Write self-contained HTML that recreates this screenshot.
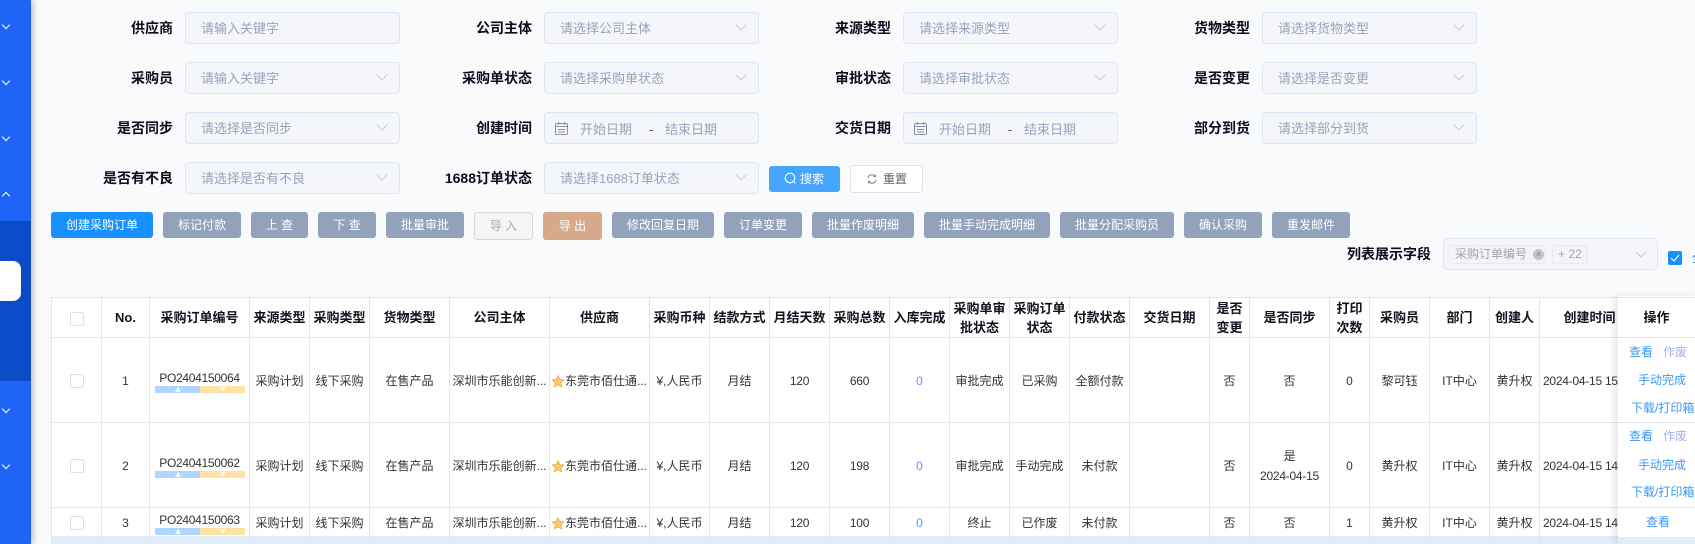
<!DOCTYPE html>
<html lang="zh-CN">
<head>
<meta charset="utf-8">
<title>采购订单</title>
<style>
*{box-sizing:border-box}
html,body{margin:0;padding:0;width:1695px;height:544px;overflow:hidden;background:#f9fafc;font-family:"Liberation Sans","Noto Sans CJK SC",sans-serif;font-size:12px;color:#333}
.a{position:absolute}
#side{left:0;top:0;width:31px;height:544px;background:#1d63f6;box-shadow:2px 0 6px rgba(0,0,0,.25)}
#dark{left:0;top:221px;width:31px;height:160px;background:#0b4bc8}
#pill{left:0;top:261px;width:21px;height:40px;background:#fff;border-radius:0 8px 8px 0}
.cv{position:absolute;left:3px;width:6px;height:6px;border-right:1px solid #fff;border-bottom:1px solid #fff;transform:rotate(45deg)}
.up{transform:rotate(225deg)}
.l{position:absolute;width:120px;text-align:right;font-size:14px;font-weight:bold;line-height:32px;height:32px;color:#0c0c1e;white-space:nowrap}
.i{position:absolute;width:215px;height:32px;background:#f4f6fb;border:1px solid #dfe5f4;border-radius:4px;font-size:13px;line-height:31px;padding-left:15px;color:#98a3b9;white-space:nowrap}
.i.s:after{content:"";position:absolute;right:13px;top:8px;width:7px;height:7px;border-right:1px solid #c6cbd6;border-bottom:1px solid #c6cbd6;transform:rotate(45deg)}
.i span{position:absolute;top:1px}
.i svg{position:absolute;left:10px;top:9px}
.b{position:absolute;top:212px;height:26px;line-height:26px;border-radius:3px;background:#93a2bb;color:#fff;text-align:center;font-size:12px;white-space:nowrap}
#wrap{left:51px;top:297px;width:1644px;height:247px;overflow:hidden}
table{border-collapse:separate;border-spacing:0;table-layout:fixed;width:1588px;background:#fff;border-top:1px solid #e1e6ef;border-left:1px solid #e1e6ef}
td,th{border-right:1px solid #e1e6ef;border-bottom:1px solid #e1e6ef;padding:1px 0 0;text-align:center;vertical-align:middle;white-space:nowrap;overflow:hidden;font-size:12px;line-height:20px;color:#333;font-weight:normal}
th{font-size:13px;font-weight:bold;color:#12121f;padding:0;line-height:19px}
tr.h{height:40px}tr.r1{height:85px}tr.r3{height:29px}
tr.f td{background:#e2edfc;border-color:#dbe6f6;border-bottom:0}
.cb{display:inline-block;width:14px;height:14px;border:1px solid #dcdfe6;border-radius:2px;background:#fff;vertical-align:middle}
.po{position:relative;height:83px}
.po.s{height:27px}
.po b{position:absolute;left:0;right:0;font-weight:normal;letter-spacing:-.3px}
.bar{position:absolute;left:5px;width:90px;height:7px;background:linear-gradient(90deg,#aed6ff 0,#aed6ff 50%,#ffe3a4 50%,#ffe3a4 100%)}
.bar i,.bar u{position:absolute;top:1px;width:0;height:0;border-left:3px solid transparent;border-right:3px solid transparent}
.bar i{left:20px;border-bottom:5px solid #fff}
.bar u{left:65px;border-top:5px solid #fff}
.n{letter-spacing:-.25px}
.bl{color:#5b96f2}
.st{vertical-align:-3px;margin-right:1px}
#op{left:1618px;top:296px;width:77px;height:248px;background:#fff;box-shadow:-4px 0 6px rgba(40,50,80,.1);overflow:visible}
#op div{position:absolute;white-space:nowrap;line-height:16px}
#clip{left:0;top:0;width:77px;height:248px;overflow:hidden}
.ln{left:0;width:77px;height:1px;background:#e1e6ef}
.t{color:#3a98fb}
.v{color:#a3aef0}
</style>
</head>
<body>
<div class="a" id="side"></div>
<div class="a" id="dark"></div>
<div class="a" id="pill"></div>
<span class="cv" style="top:22px"></span>
<span class="cv" style="top:78px"></span>
<span class="cv" style="top:134px"></span>
<span class="cv up" style="top:193px"></span>
<span class="cv" style="top:406px"></span>
<span class="cv" style="top:462px"></span>

<div class="l" style="left:53px;top:12px">供应商</div><div class="i" style="left:185px;top:12px">请输入关键字</div>
<div class="l" style="left:412px;top:12px">公司主体</div><div class="i s" style="left:544px;top:12px">请选择公司主体</div>
<div class="l" style="left:771px;top:12px">来源类型</div><div class="i s" style="left:903px;top:12px">请选择来源类型</div>
<div class="l" style="left:1130px;top:12px">货物类型</div><div class="i s" style="left:1262px;top:12px">请选择货物类型</div>

<div class="l" style="left:53px;top:62px">采购员</div><div class="i s" style="left:185px;top:62px">请输入关键字</div>
<div class="l" style="left:412px;top:62px">采购单状态</div><div class="i s" style="left:544px;top:62px">请选择采购单状态</div>
<div class="l" style="left:771px;top:62px">审批状态</div><div class="i s" style="left:903px;top:62px">请选择审批状态</div>
<div class="l" style="left:1130px;top:62px">是否变更</div><div class="i s" style="left:1262px;top:62px">请选择是否变更</div>

<div class="l" style="left:53px;top:112px">是否同步</div><div class="i s" style="left:185px;top:112px">请选择是否同步</div>
<div class="l" style="left:412px;top:112px">创建时间</div>
<div class="i" style="left:544px;top:112px"><svg width="13" height="13" viewBox="0 0 13 13" fill="none" stroke="#8d93a5"><rect x=".5" y="1.500" width="12" height="11" rx="1"/><path d="M.5 4.500h12M3.500 0v3M9.500 0v3M3 7.500h7M3 10h7"/></svg><span style="left:35px">开始日期</span><span style="left:104px;color:#555">-</span><span style="left:120px">结束日期</span></div>
<div class="l" style="left:771px;top:112px">交货日期</div>
<div class="i" style="left:903px;top:112px"><svg width="13" height="13" viewBox="0 0 13 13" fill="none" stroke="#8d93a5"><rect x=".5" y="1.500" width="12" height="11" rx="1"/><path d="M.5 4.500h12M3.500 0v3M9.500 0v3M3 7.500h7M3 10h7"/></svg><span style="left:35px">开始日期</span><span style="left:104px;color:#555">-</span><span style="left:120px">结束日期</span></div>
<div class="l" style="left:1130px;top:112px">部分到货</div><div class="i s" style="left:1262px;top:112px">请选择部分到货</div>

<div class="l" style="left:53px;top:162px">是否有不良</div><div class="i s" style="left:185px;top:162px">请选择是否有不良</div>
<div class="l" style="left:412px;top:162px">1688订单状态</div><div class="i s" style="left:544px;top:162px">请选择1688订单状态</div>

<div class="a" style="left:769px;top:166px;width:71px;height:26px;background:#46a6ff;border-radius:3px;color:#fff;line-height:26px;padding-left:31px;white-space:nowrap">搜索</div>
<svg class="a" style="left:784px;top:172px" width="13" height="13" viewBox="0 0 13 13" fill="none" stroke="#fff" stroke-width="1.100"><circle cx="6" cy="6" r="4.800"/><path d="M9.500 9.500l2 2"/></svg>
<div class="a" style="left:850px;top:165px;width:73px;height:28px;background:#fff;border:1px solid #dfe3ec;border-radius:3px;color:#606266;line-height:26px;padding-left:32px;white-space:nowrap">重置</div>
<svg class="a" style="left:867px;top:174px" width="10" height="10" viewBox="0 0 10 10" fill="none" stroke="#7d8390"><path d="M1 4a4 4 0 0 1 7-1.800M9 6a4 4 0 0 1-7 1.800"/><path d="M8.400.6v2H6.400M1.600 9.400v-2h2"/></svg>

<div class="b" style="left:51px;width:102px;background:#1890ff">创建采购订单</div>
<div class="b" style="left:163px;width:78px">标记付款</div>
<div class="b" style="left:251px;width:57px">上 查</div>
<div class="b" style="left:318px;width:58px">下 查</div>
<div class="b" style="left:386px;width:78px">批量审批</div>
<div class="b" style="left:474px;width:59px;height:28px;line-height:26px;background:#f5f5f5;border:1px solid #d9d9d9;color:#aaa">导 入</div>
<div class="b" style="left:543px;width:59px;height:28px;line-height:28px;background:#d5a98a">导 出</div>
<div class="b" style="left:612px;width:102px">修改回复日期</div>
<div class="b" style="left:724px;width:78px">订单变更</div>
<div class="b" style="left:812px;width:102px">批量作废明细</div>
<div class="b" style="left:924px;width:126px">批量手动完成明细</div>
<div class="b" style="left:1060px;width:114px">批量分配采购员</div>
<div class="b" style="left:1184px;width:78px">确认采购</div>
<div class="b" style="left:1272px;width:78px">重发邮件</div>

<div class="a" style="left:1347px;top:244px;font-size:14px;font-weight:bold;line-height:20px;color:#0c0c1e;white-space:nowrap">列表展示字段</div>
<div class="a" style="left:1443px;top:238px;width:215px;height:32px;background:#f4f6fb;border:1px solid #dfe5f4;border-radius:4px"></div>
<div class="a" style="left:1449px;top:245px;width:97px;height:19px;background:#f4f4f5;border:1px solid #e9e9eb;border-radius:3px;color:#a0a4ac;line-height:17px;padding-left:5px;white-space:nowrap">采购订单编号</div>
<div class="a" style="left:1533px;top:249px;width:11px;height:11px;border-radius:50%;background:#c0c4cc;color:#7d818a;font-size:9px;line-height:11px;text-align:center">×</div>
<div class="a" style="left:1552px;top:245px;width:36px;height:19px;background:#f4f4f5;border:1px solid #e9e9eb;border-radius:3px;color:#a0a4ac;line-height:17px;text-align:center;white-space:nowrap">+ 22</div>
<div class="a" style="left:1637px;top:248px;width:8px;height:8px;border-right:1px solid #c6cbd6;border-bottom:1px solid #c6cbd6;transform:rotate(45deg)"></div>
<div class="a" style="left:1668px;top:251px;width:14px;height:14px;background:#1890ff;border-radius:2px"></div>
<svg class="a" style="left:1668px;top:251px" width="14" height="14" viewBox="0 0 14 14" fill="none" stroke="#fff" stroke-width="1.200"><path d="M3 7l3 3 5-6"/></svg>
<div class="a" style="left:1692px;top:250px;color:#1890ff;line-height:16px;white-space:nowrap;width:3px;overflow:hidden">全</div>

<div class="a" id="wrap">
<table>
<colgroup>
<col style="width:50px"><col style="width:48px"><col style="width:100px"><col style="width:60px"><col style="width:60px"><col style="width:80px"><col style="width:100px"><col style="width:100px">
<col style="width:60px"><col style="width:60px"><col style="width:60px"><col style="width:60px"><col style="width:60px"><col style="width:60px"><col style="width:60px"><col style="width:60px">
<col style="width:80px"><col style="width:40px"><col style="width:80px"><col style="width:40px"><col style="width:60px"><col style="width:60px"><col style="width:50px"><col style="width:100px">
</colgroup>
<tr class="h"><th><span class="cb"></span></th><th>No.</th><th>采购订单编号</th><th>来源类型</th><th>采购类型</th><th>货物类型</th><th>公司主体</th><th>供应商</th><th>采购币种</th><th>结款方式</th><th>月结天数</th><th>采购总数</th><th>入库完成</th><th>采购单审<br>批状态</th><th>采购订单<br>状态</th><th>付款状态</th><th>交货日期</th><th>是否<br>变更</th><th>是否同步</th><th>打印<br>次数</th><th>采购员</th><th>部门</th><th>创建人</th><th>创建时间</th></tr>
<tr class="r1"><td><span class="cb"></span></td><td>1</td><td><div class="po"><b style="top:29px">PO2404150064</b><span class="bar" style="top:47px"><i></i><u></u></span></div></td><td>采购计划</td><td>线下采购</td><td>在售产品</td><td>深圳市乐能创新...</td><td><svg class="st" width="12" height="13" viewBox="0 0 12 13"><path d="M6 .5l1.700 4 4.200.4-3.200 2.800 1 4.300L6 9.700 2.300 12l1-4.300L.1 4.900l4.200-.4z" fill="#f8cb6a" stroke="#e9a93a" stroke-width=".7"/></svg>东莞市佰仕通...</td><td>¥,人民币</td><td>月结</td><td class="n">120</td><td class="n">660</td><td class="bl">0</td><td>审批完成</td><td>已采购</td><td>全额付款</td><td></td><td>否</td><td>否</td><td>0</td><td>黎可钰</td><td>IT中心</td><td>黄升权</td><td style="text-align:left;padding-left:3px" class="n">2024-04-15 15:32:10</td></tr>
<tr class="r1"><td><span class="cb"></span></td><td>2</td><td><div class="po"><b style="top:29px">PO2404150062</b><span class="bar" style="top:47px"><i></i><u></u></span></div></td><td>采购计划</td><td>线下采购</td><td>在售产品</td><td>深圳市乐能创新...</td><td><svg class="st" width="12" height="13" viewBox="0 0 12 13"><path d="M6 .5l1.700 4 4.200.4-3.200 2.800 1 4.300L6 9.700 2.300 12l1-4.300L.1 4.900l4.200-.4z" fill="#f8cb6a" stroke="#e9a93a" stroke-width=".7"/></svg>东莞市佰仕通...</td><td>¥,人民币</td><td>月结</td><td class="n">120</td><td class="n">198</td><td class="bl">0</td><td>审批完成</td><td>手动完成</td><td>未付款</td><td></td><td>否</td><td class="n">是<br>2024-04-15</td><td>0</td><td>黄升权</td><td>IT中心</td><td>黄升权</td><td style="text-align:left;padding-left:3px" class="n">2024-04-15 14:20:31</td></tr>
<tr class="r3"><td><span class="cb"></span></td><td>3</td><td><div class="po s"><b style="top:1px">PO2404150063</b><span class="bar" style="top:19px"><i></i><u></u></span></div></td><td>采购计划</td><td>线下采购</td><td>在售产品</td><td>深圳市乐能创新...</td><td><svg class="st" width="12" height="13" viewBox="0 0 12 13"><path d="M6 .5l1.700 4 4.200.4-3.200 2.800 1 4.300L6 9.700 2.300 12l1-4.300L.1 4.900l4.200-.4z" fill="#f8cb6a" stroke="#e9a93a" stroke-width=".7"/></svg>东莞市佰仕通...</td><td>¥,人民币</td><td>月结</td><td class="n">120</td><td class="n">100</td><td class="bl">0</td><td>终止</td><td>已作废</td><td>未付款</td><td></td><td>否</td><td>否</td><td>1</td><td>黄升权</td><td>IT中心</td><td>黄升权</td><td style="text-align:left;padding-left:3px" class="n">2024-04-15 14:11:05</td></tr>
<tr class="f" style="height:20px"><td></td><td></td><td></td><td></td><td></td><td></td><td></td><td></td><td></td><td></td><td></td><td></td><td></td><td></td><td></td><td></td><td></td><td></td><td></td><td></td><td></td><td></td><td></td><td></td></tr>
</table>
</div>

<div class="a" id="op"><div id="clip">
<div class="ln" style="top:1px"></div>
<div style="left:0;width:77px;text-align:center;top:14px;font-size:13px;font-weight:bold;color:#12121f;line-height:16px">操作</div>
<div class="ln" style="top:41px"></div>
<div class="t" style="left:11px;top:48px">查看</div><div class="v" style="left:45px;top:48px">作废</div>
<div class="t" style="left:20px;top:76px">手动完成</div>
<div class="t" style="left:13px;top:104px">下载/打印箱</div>
<div class="ln" style="top:126px"></div>
<div class="t" style="left:11px;top:132px">查看</div><div class="v" style="left:45px;top:132px">作废</div>
<div class="t" style="left:20px;top:161px">手动完成</div>
<div class="t" style="left:13px;top:188px">下载/打印箱</div>
<div class="ln" style="top:211px"></div>
<div class="t" style="left:28px;top:218px">查看</div>
<div style="left:0;top:241px;width:77px;height:7px;background:#e2edfc"></div>
</div></div>
</body>
</html>
